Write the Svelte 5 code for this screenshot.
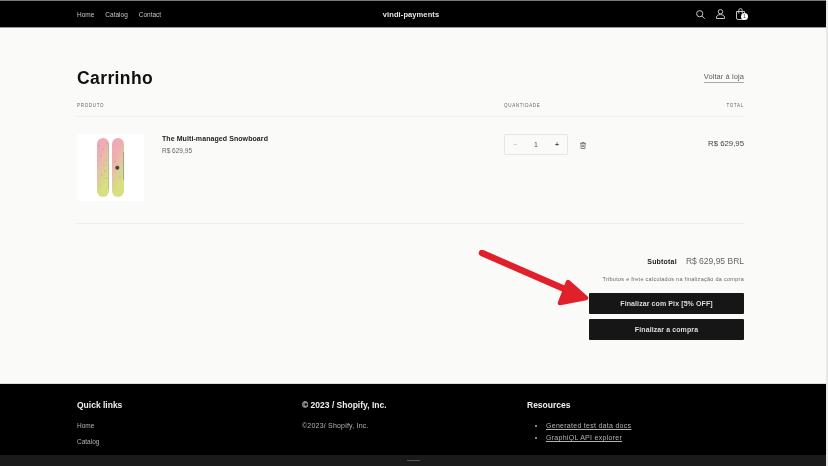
<script>
  const quick = ['Home', 'Catalog', 'Contact'];
</script>

<div class="page">
  <div class="content">
    <header class="top">
      <nav class="nav">
        <a>Home</a><a>Catalog</a><a>Contact</a>
      </nav>
      <div class="brand">vindi-payments</div>
      <div class="icons">
        <svg width="9" height="9" viewBox="0 0 9 9" fill="none" stroke="#d8d8d8" stroke-width=".9"><circle cx="3.700" cy="3.700" r="3.100"/><path d="M6 6 8.700 8.700"/></svg>
        <svg width="9" height="10" viewBox="0 0 9 10" fill="none" stroke="#d8d8d8" stroke-width=".9"><circle cx="4.500" cy="2.700" r="2.200"/><path d="M4.500 5.600c-2.200 0-3.800.8-4 2.500v1.400h8V8.100c-.2-1.700-1.800-2.500-4-2.500Z"/></svg>
        <div class="cart">
          <svg width="9" height="12" viewBox="0 0 9 12" fill="none" stroke="#d8d8d8" stroke-width=".9"><path d="M.5 3.500h8v6.500a1.500 1.500 0 0 1-1.500 1.500H2A1.500 1.500 0 0 1 .5 10Z"/><path d="M2.800 5.500V2.300a1.700 1.700 0 0 1 3.400 0v3.200"/></svg>
          <span class="badge">1</span>
        </div>
      </div>
    </header>

    <main class="main">
      <div class="title-row">
        <h1>Carrinho</h1>
        <a class="back">Voltar à loja</a>
      </div>
      <div class="cols heads">
        <span>PRODUTO</span>
        <span>QUANTIDADE</span>
        <span class="right">TOTAL</span>
      </div>
      <div class="cols item">
        <div class="product">
          <div class="thumb">
            <svg width="67" height="67" viewBox="0 0 67 67">
              <defs>
                <linearGradient id="g" x1="0.2" y1="0" x2="0.6" y2="1">
                  <stop offset="0" stop-color="#efa9b6"/>
                  <stop offset="0.28" stop-color="#eeaeb0"/>
                  <stop offset="0.5" stop-color="#e5c3a2"/>
                  <stop offset="0.68" stop-color="#dcd38e"/>
                  <stop offset="0.82" stop-color="#d6e07e"/>
                  <stop offset="1" stop-color="#d6e07e"/>
                </linearGradient>
              </defs>
              <rect x="20" y="4" width="12" height="59" rx="6" fill="url(#g)"/>
              <rect x="35" y="4" width="12" height="59" rx="6" fill="url(#g)"/>
              <path d="M31.600 9v46" stroke="#a9b0a8" stroke-width=".7"/>
              <path d="M46.600 18v28" stroke="#8f9aa8" stroke-width=".9"/>
              <circle cx="40.300" cy="33.700" r="2" fill="#444"/>
              <g fill="#8d9a88">
                <circle cx="22" cy="12" r=".7"/><circle cx="26" cy="15" r=".5"/><circle cx="30" cy="9" r=".6"/>
                <circle cx="24" cy="22" r=".5"/><circle cx="29" cy="26" r=".5"/><circle cx="27" cy="31" r=".5"/>
                <circle cx="28" cy="37" r=".6"/><circle cx="25" cy="41" r=".5"/><circle cx="29" cy="44" r=".5"/>
                <circle cx="23" cy="52" r=".4"/><circle cx="38" cy="27" r=".5"/><circle cx="43" cy="43" r=".5"/>
              </g>
            </svg>
          </div>
          <div class="info">
            <div class="name">The Multi-managed Snowboard</div>
            <div class="price">R$ 629,95</div>
          </div>
        </div>
        <div class="qty-cell">
          <div class="qty"><span class="minus">−</span><span>1</span><span class="plus">+</span></div>
          <svg class="trash" width="6" height="7" viewBox="0 0 7 8" fill="none" stroke="#666" stroke-width=".9"><path d="M0 1.500h7M2.200 1.500V.500h2.600v1M1 1.500l.3 6h4.400l.3-6M2.700 3v3M4.300 3v3"/></svg>
        </div>
        <div class="line-total">R$ 629,95</div>
      </div>
      <div class="summary">
        <div class="subtotal"><b>Subtotal</b><span>R$ 629,95 BRL</span></div>
        <div class="tax">Tributos e frete calculados na finalização da compra</div>
        <button>Finalizar com Pix [5% OFF]</button>
        <button>Finalizar a compra</button>
      </div>
    </main>

    <footer class="foot">
      <div class="foot-col">
        <h3>Quick links</h3>
        <ul class="plain">
          {#each quick as q}<li>{q}</li>{/each}
        </ul>
      </div>
      <div class="foot-col">
        <h3>© 2023 / Shopify, Inc.</h3>
        <p>©2023/ Shopify, Inc.</p>
      </div>
      <div class="foot-col">
        <h3>Resources</h3>
        <ul class="bullets">
          <li><a>Generated test data docs</a></li>
          <li><a>GraphiQL API explorer</a></li>
        </ul>
      </div>
    </footer>
  </div>

  <svg class="arrow" width="118" height="58" viewBox="0 0 118 58" fill="none" stroke="#e0202a" stroke-linecap="round" stroke-linejoin="round">
    <path d="M4 3 L98 44" stroke-width="6.500"/>
    <path d="M90 32 L108 48 L82 53 Z" stroke-width="4.500" fill="#e0202a"/>
  </svg>
  <div class="bottom"><i></i></div>
  <div class="scroll"></div>
</div>

<style>
  :global(body) { margin: 0; }
  .page {
    position: relative;
    width: 828px;
    height: 466px;
    overflow: hidden;
    background: #fafaf8;
    font-family: "Liberation Sans", Arial, sans-serif;
  }
  .content { width: 826px; will-change: transform; }
  .top {
    height: 26px;
    background: #000;
    border-top: 1px solid #777;
    border-bottom: 1px solid #999;
    display: grid;
    grid-template-columns: 1fr auto 1fr;
    align-items: center;
    padding: 0 81px 0 77px;
    box-sizing: content-box;
    color: #c4c4c4;
  }
  .nav { display: flex; gap: 11px; font-size: 6.500px; }
  .brand { color: #e8e8e8; font-size: 7.500px; font-weight: 700; letter-spacing: 0.1px; }
  .icons { display: flex; justify-content: flex-end; align-items: center; gap: 11px; }
  .cart { position: relative; height: 12px; margin-top: -1px; }
  .cart svg { display: block; }
  .badge {
    position: absolute;
    left: 5px;
    top: 5px;
    width: 7px;
    height: 7px;
    border-radius: 50%;
    background: #fff;
    color: #222;
    font-size: 4.500px;
    line-height: 7px;
    text-align: center;
  }
  .main { padding: 40px 82px 0 77px; height: 355px; box-sizing: border-box; color: #121212; }
  .title-row { display: flex; justify-content: space-between; align-items: center; height: 20px; }
  h1 { margin: 0; font-size: 17.500px; font-weight: 700; letter-spacing: 0.4px; color: #111; }
  .back { font-size: 7.500px; color: #5c5c5c; letter-spacing: 0.08px; border-bottom: 1px solid #aaa; line-height: 8px; padding-bottom: 1px; }
  .cols { display: grid; grid-template-columns: 427px 1fr auto; }
  .heads {
    margin-top: 13px;
    height: 16px;
    box-sizing: border-box;
    border-bottom: 1px solid #eeeeec;
    font-size: 4.500px;
    letter-spacing: 0.7px;
    color: #666;
    padding-top: 2px;
  }
  .item { padding-top: 17px; height: 107px; box-sizing: border-box; border-bottom: 1px solid #eeeeec; }
  .product { display: flex; gap: 18px; }
  .thumb { width: 67px; height: 67px; background: #fff; border-radius: 1px; }
  .thumb svg { display: block; }
  .info { padding-top: 0; }
  .name { font-size: 7px; font-weight: 700; letter-spacing: 0.08px; color: #1c1c1c; line-height: 9px; }
  .price { font-size: 6.500px; color: #666; margin-top: 3px; line-height: 9px; }
  .qty-cell { display: flex; align-items: flex-start; gap: 12px; }
  .qty {
    width: 64px;
    height: 21px;
    border: 1px solid #e6e6e4;
    border-radius: 1px;
    box-sizing: border-box;
    display: flex;
    justify-content: space-between;
    align-items: center;
    padding: 0 8px;
    font-size: 7px;
    color: #555;
  }
  .minus { color: #aaa; }
  .plus { font-weight: 700; }
  .trash { margin-top: 8px; }
  .line-total { font-size: 7.800px; color: #444; padding-top: 5px; }
  .summary { display: flex; flex-direction: column; align-items: flex-end; padding-top: 32px; }
  .subtotal { display: flex; gap: 9px; align-items: baseline; font-size: 8.500px; color: #666; line-height: 11px; }
  .subtotal b { font-size: 7px; color: #222; letter-spacing: 0.2px; }
  .tax { font-size: 5.500px; color: #666; letter-spacing: 0.28px; margin-top: 9px; line-height: 7px; }
  button {
    width: 155px;
    height: 21px;
    background: #161616;
    color: #ddd;
    border: 0;
    border-radius: 1px;
    font: 700 7px "Liberation Sans", Arial, sans-serif;
    letter-spacing: 0.1px;
    padding: 0;
  }
  .tax + button { margin-top: 10px; }
  button + button { margin-top: 5px; }
  .foot {
    height: 83px;
    overflow: hidden;
    box-sizing: border-box;
    background: #000;
    border-top: 1px solid #ddd;
    color: #b4b4b4;
    padding: 16px 0 0 77px;
    display: grid;
    grid-template-columns: 225px 225px 1fr;
    font-size: 7px;
  }
  h3 { margin: 0; font-size: 8.500px; line-height: 10px; font-weight: 700; color: #eee; }
  p { margin: 11px 0 0; line-height: 9px; letter-spacing: 0.2px; }
  ul { margin: 11px 0 0; padding: 0; line-height: 9px; }
  .plain { list-style: none; font-size: 6.500px; }
  .plain li { margin-bottom: 7px; }
  .bullets { padding-left: 19px; list-style: disc; letter-spacing: 0.28px; }
  .bullets li { margin-bottom: 3px; }
  .bullets a { text-decoration: underline; text-underline-offset: 1px; }
  .arrow { position: absolute; left: 478px; top: 250px; }
  .bottom {
    position: absolute;
    left: 0;
    right: 2px;
    bottom: 0;
    height: 11px;
    background: #1a1a1a;
    display: flex;
    justify-content: center;
    align-items: center;
  }
  .bottom i { width: 13px; height: 1.500px; background: #555; }
  .scroll { position: absolute; right: 0; top: 0; width: 2px; height: 466px; background: #e8e8e8; }
</style>
